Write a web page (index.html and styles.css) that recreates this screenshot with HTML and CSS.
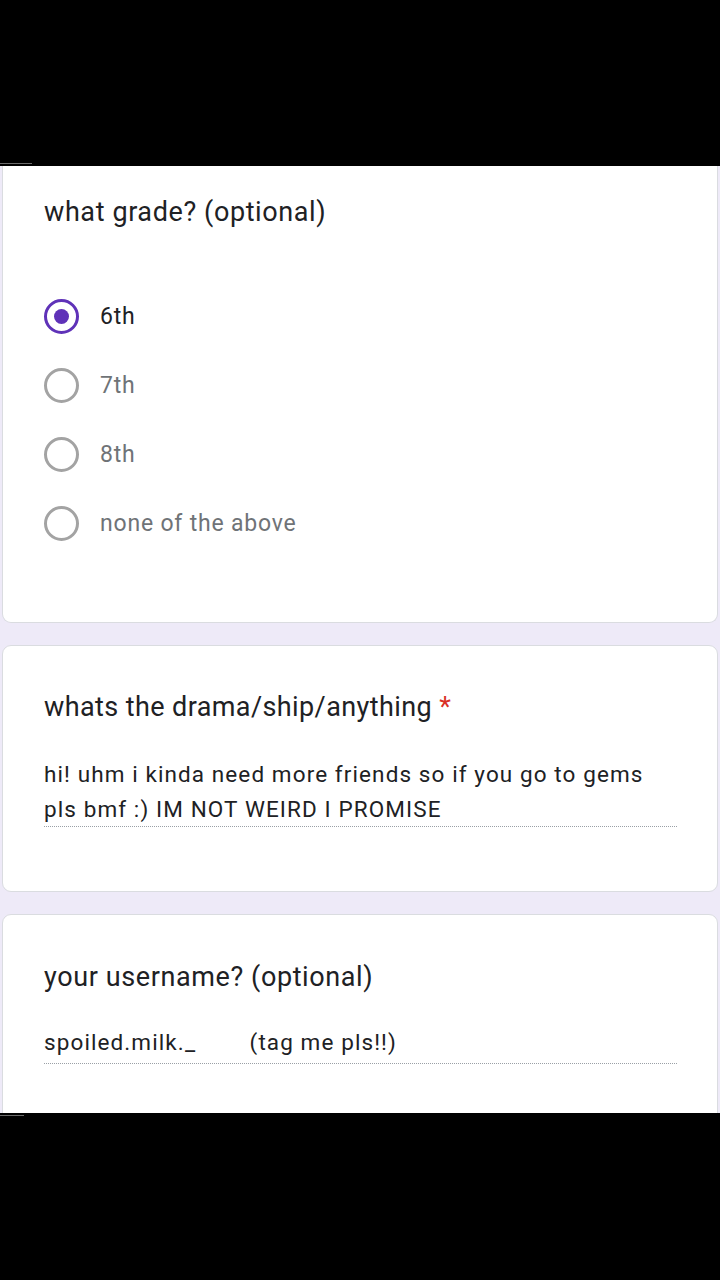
FILE: index.html
```html
<!DOCTYPE html>
<html lang="en">
<head>
<meta charset="utf-8">
<title>Form response</title>
<link rel="stylesheet" href="styles.css">
</head>
<body>
<div class="band band-top"><div class="mark mark-top"></div></div>
<main class="screen">
  <section class="card card-first">
    <h2 class="q-title">what grade? (optional)</h2>
    <ul class="options">
      <li class="option selected"><span class="radio"><span class="dot"></span></span><span class="opt-label">6th</span></li>
      <li class="option"><span class="radio"></span><span class="opt-label">7th</span></li>
      <li class="option"><span class="radio"></span><span class="opt-label">8th</span></li>
      <li class="option"><span class="radio"></span><span class="opt-label">none of the above</span></li>
    </ul>
  </section>
  <section class="card card-drama">
    <h2 class="q-title title-tight">whats the drama/ship/anything <span class="req">*</span></h2>
    <p class="answer answer-long">hi! uhm i kinda need more friends so if you go to gems pls bmf :) IM NOT WEIRD I PROMISE</p>
  </section>
  <section class="card card-user">
    <h2 class="q-title">your username? (optional)</h2>
    <p class="answer answer-short">spoiled.milk._        (tag me pls!!)</p>
  </section>
</main>
<div class="band band-bottom"><div class="mark mark-bottom"></div></div>
</body>
</html>
```
FILE: styles.css
```css
* { box-sizing: border-box; }
html, body { margin: 0; padding: 0; }
body {
  background: #000;
  font-family: Roboto, "Noto Sans", Arial, sans-serif;
  color: #202124;
  width: 720px;
  height: 1280px;
  overflow: hidden;
}
.band { background: #000; }
.band-top { height: 166px; display: flex; align-items: flex-end; padding-bottom: 2px; }
.band-bottom { height: 167px; padding-top: 2px; }
.mark { height: 1px; background: #6b6b6b; }
.mark-top { width: 32px; }
.mark-bottom { width: 24px; }

.screen {
  height: 947px;
  background: #eeeaf8;
  overflow: hidden;
  padding: 0 2px 0 2px;
  display: flex;
  flex-direction: column;
  gap: 22px;
}
.card {
  background: #fff;
  border: 1px solid #dadce0;
  border-radius: 9px;
  padding: 44px 40px 62px 41px;
  flex-shrink: 0;
}
.card-first {
  border-top: none;
  border-radius: 0 0 9px 9px;
  padding-top: 30px;
  padding-bottom: 64px;
}
.card-drama { padding-top: 45px; padding-bottom: 64px; }
.card-user { padding-top: 46px; height: 240px; }

.q-title {
  margin: 0;
  font-size: 27px;
  line-height: 32px;
  font-weight: 400;
  color: #202124;
  letter-spacing: 0.6px;
}
.title-tight { letter-spacing: 0.4px; }
.req { color: #d93025; }

.options {
  list-style: none;
  margin: 54px 0 0 0;
  padding: 0;
}
.option {
  height: 69px;
  display: flex;
  align-items: center;
  gap: 21px;
  color: #6f7377;
  font-size: 23px;
  letter-spacing: 0.8px;
}
.option.selected { color: #202124; }
.radio {
  width: 35px;
  height: 35px;
  border-radius: 50%;
  border: 3px solid #a3a3a3;
  display: flex;
  align-items: center;
  justify-content: center;
  flex-shrink: 0;
}
.option.selected .radio { border-color: #5f32b8; }
.dot {
  width: 15px;
  height: 15px;
  border-radius: 50%;
  background: #5f32b8;
}
.opt-label { line-height: 30px; }

.answer {
  margin: 0;
  font-size: 22.5px;
  line-height: 34.5px;
  letter-spacing: 1.1px;
  color: #202124;
  border-bottom: 1px dotted #9aa0a6;
}
.answer-long { margin-top: 34px; }
.answer-short { margin-top: 32px; padding-bottom: 3px; white-space: pre; }
```
